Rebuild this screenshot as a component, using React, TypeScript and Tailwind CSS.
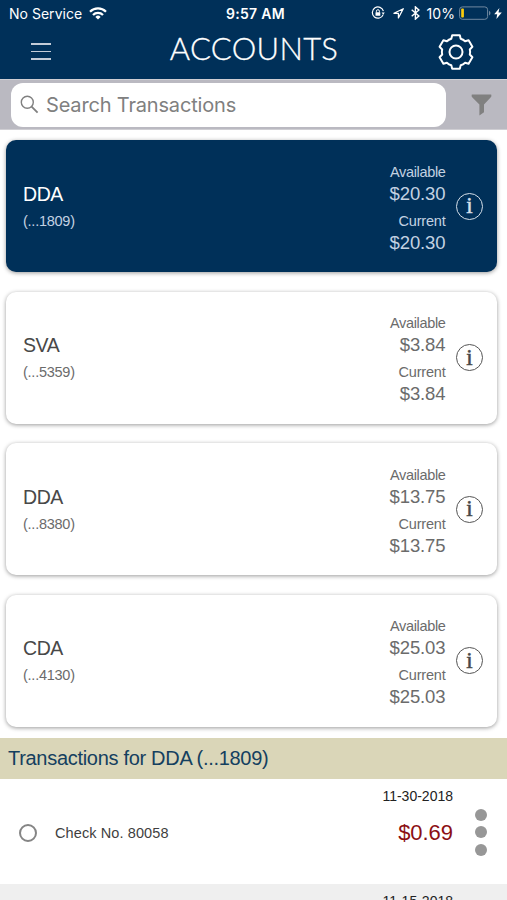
type Account = {
  name: string;
  mask: string;
  available: string;
  current: string;
  selected?: boolean;
};

const accounts: Account[] = [
  { name: "DDA", mask: "(...1809)", available: "$20.30", current: "$20.30", selected: true },
  { name: "SVA", mask: "(...5359)", available: "$3.84", current: "$3.84" },
  { name: "DDA", mask: "(...8380)", available: "$13.75", current: "$13.75" },
  { name: "CDA", mask: "(...4130)", available: "$25.03", current: "$25.03" },
];

function StatusBar() {
  return (
    <div className="grid h-7 grid-cols-[1fr_auto_1fr] items-center pb-[2px] pl-[9px] pr-[5px] font-['Inter',sans-serif] text-[14px] text-white">
      <div className="flex items-center gap-[7px]">
        <span className="tracking-[0.02px]">No Service</span>
        <svg width="18" height="13" viewBox="0 0 18 13" fill="none" stroke="currentColor" strokeWidth="2.3">
          <path d="M1 4.7a11.4 11.4 0 0 1 16 0" />
          <path d="M4 8a7 7 0 0 1 10 0" />
          <path d="M9 12.5 6.4 9.9a3.7 3.7 0 0 1 5.2 0z" fill="currentColor" stroke="none" />
        </svg>
      </div>
      <span className="font-semibold tracking-[0.3px]">9:57 AM</span>
      <div className="flex items-center justify-end">
        <svg className="mr-[8px]" width="14" height="14" viewBox="0 0 14 14" fill="none" stroke="currentColor">
          <path d="M12.2 8.6A5.6 5.6 0 1 1 12.4 5.2" strokeWidth="1.2" />
          <path d="M10.6 6.4h3.2l-1.6 2.3z" fill="currentColor" stroke="none" />
          <path d="M5.4 6.5V5.2a1.5 1.5 0 0 1 3 0v1.3" strokeWidth="1" />
          <rect x="4.5" y="6.2" width="4.8" height="3.6" rx="0.5" fill="currentColor" stroke="none" />
        </svg>
        <svg className="mr-[7px]" width="11" height="11" viewBox="0 0 11 11" fill="none" stroke="currentColor">
          <path d="M10.3.7.9 5.3h4.5v4.6z" strokeWidth="1.2" strokeLinejoin="round" />
        </svg>
        <svg className="mr-[6px]" width="9" height="14" viewBox="0 0 9 14" fill="none" stroke="currentColor">
          <path d="m.7 3.8 7.2 6.1-3.5 3.2V.9l3.5 3.2-7.2 6.1" strokeWidth="1.4" />
        </svg>
        <span className="mr-[4px] tracking-[0.1px]">10%</span>
        <svg width="32" height="14" viewBox="0 0 32 14">
          <rect x="0.6" y="0.9" width="28" height="12.4" rx="2.8" fill="none" stroke="#7089a0" strokeWidth="1" />
          <rect x="2.2" y="2.6" width="2.7" height="9" rx="0.8" fill="#fccb0a" />
          <path d="M30 4.8c2 .9 2 3.7 0 4.6z" fill="#7089a0" />
        </svg>
        <svg className="ml-[3px]" width="8" height="11" viewBox="0 0 8 11" fill="currentColor">
          <path d="M5.4 0 .2 6.3h3L2.4 11l5.4-6.6H4.5z" />
        </svg>
      </div>
    </div>
  );
}

function GearIcon() {
  return (
    <svg width="38" height="38" viewBox="-19 -19 38 38" fill="none" stroke="white" strokeWidth="2" strokeLinejoin="round">
      <path d="M-3.8-16.7H3.8L4.7-13.2Q7.200-12.5 9.1-10.7L12.6-11.7 16.4-5.2 13.8-2.5Q14.5 0 13.8 2.5L16.4 5.2 12.6 11.7 9.1 10.7Q7.200 12.5 4.7 13.2L3.8 16.700H-3.8L-4.7 13.2Q-7.200 12.5-9.1 10.7L-12.6 11.7-16.4 5.2-13.8 2.5Q-14.5 0-13.8-2.5L-16.4-5.2-12.6-11.7-9.1-10.7Q-7.200-12.5-4.7-13.2z" />
      <circle r="6.5" />
    </svg>
  );
}

function Header() {
  return (
    <header className="h-[79px] bg-[#003059]">
      <StatusBar />
      <div className="grid h-[48px] grid-cols-[1fr_auto_1fr] items-center pl-[31px] pr-8">
        <div className="-mt-px flex w-5 flex-col gap-[6px]">
          <span className="h-[1.5px] bg-[#c3ccd8]" />
          <span className="h-[1.5px] bg-[#c3ccd8]" />
          <span className="h-[1.5px] bg-[#c3ccd8]" />
        </div>
        <h1 className="-mr-0.5 -mt-[7px] font-['Lato',sans-serif] text-[31px] font-light leading-none tracking-[0.3px] text-white [-webkit-text-stroke:0.3px_white]">
          ACCOUNTS
        </h1>
        <div className="flex justify-end">
          <GearIcon />
        </div>
      </div>
    </header>
  );
}

function SearchBar() {
  return (
    <div className="flex h-[51px] items-center border-y border-[#cfced3] bg-[#bab9c1] pl-[11px] pr-[15px]">
      <div className="flex h-11 w-[435px] items-center rounded-xl bg-white pl-[9px] text-[#808080]">
        <svg width="19" height="19" viewBox="0 0 19 19" fill="none" stroke="currentColor" strokeWidth="1.4">
          <circle cx="7.3" cy="7.3" r="6" />
          <path d="m11.6 11.6 6 6" strokeWidth="1.9" />
        </svg>
        <span className="ml-[7px] font-['Inter',sans-serif] text-[20px] tracking-[-0.17px]">Search Transactions</span>
      </div>
      <svg className="ml-auto" width="21" height="22" viewBox="0 0 21 22" fill="#808080">
        <path d="M.8.5h19.4q.8 1.8-.6 3L13 10.5v7.8L8.4 21.5v-11L1.4 3.5Q0 2.3.8.5z" />
      </svg>
    </div>
  );
}

function AccountCard({ account }: { account: Account }) {
  const { name, mask, available, current, selected } = account;
  return (
    <div
      className={`flex h-[132px] items-center rounded-[10px] pl-[17px] pr-[14px] pt-0.5 shadow-[0_1px_4px_rgba(0,0,0,0.4)] ${
        selected ? "bg-[#003059] text-[#c3d2e2]" : "bg-white text-[#6b6b6b]"
      }`}
    >
      <div className="pt-px">
        <p className={`text-[19.5px] leading-[27px] tracking-[-0.4px] ${selected ? "text-white" : "text-[#484848]"}`}>{name}</p>
        <p className="text-[14.5px] leading-[27px] tracking-[-0.25px]">{mask}</p>
      </div>
      <div className="ml-auto text-right leading-[22px]">
        <p className="text-[14.5px] tracking-[-0.35px]">Available</p>
        <p className="text-[18.5px] tracking-[-0.1px]">{available}</p>
        <p className="mt-[5px] text-[14.5px] tracking-[-0.2px]">Current</p>
        <p className="text-[18.5px] tracking-[-0.1px]">{current}</p>
      </div>
      <span
        className={`-mt-0.5 ml-[10.5px] flex size-[27px] items-center justify-center rounded-full border-[1.5px] pb-px font-['Liberation_Serif',serif] text-[23px] leading-none [-webkit-text-stroke:0.5px_currentColor] ${
          selected ? "border-[#d5dfe9] text-[#d5dfe9]" : "border-[#555] text-[#484848]"
        }`}
      >
        i
      </span>
    </div>
  );
}

function TransactionRow() {
  return (
    <div className="flex h-[105px] bg-white pl-[19px] pr-[20px]">
      <div className="flex items-center pt-[2px]">
        <span className="size-[18px] rounded-full border-2 border-[#858585]" />
        <span className="ml-[18px] pt-0.5 text-[14.5px] tracking-[0.1px] text-[#3f3f3f]">Check No. 80058</span>
      </div>
      <div className="ml-auto text-right">
        <p className="mt-[7px] text-[14px] leading-5 text-[#222]">11-30-2018</p>
        <p className="mt-[13px] text-[22px] leading-7 tracking-[-0.05px] text-[#8c0f13]">$0.69</p>
      </div>
      <div className="ml-[22px] flex flex-col justify-center gap-[5.5px] pt-px">
        <span className="size-3 rounded-full bg-[#979797]" />
        <span className="size-3 rounded-full bg-[#979797]" />
        <span className="size-3 rounded-full bg-[#979797]" />
      </div>
    </div>
  );
}

export default function App() {
  return (
    <div className="h-[900px] w-[507px] overflow-hidden bg-white font-['Liberation_Sans',sans-serif]">
      <Header />
      <SearchBar />
      <main className="flex flex-col gap-[19.5px] pb-[11.5px] pl-[6px] pr-[10px] pt-[10px]">
        {accounts.map((account) => (
          <AccountCard key={account.mask} account={account} />
        ))}
      </main>
      <section>
        <h2 className="h-[41px] bg-[#dad6b8] pl-2 text-[20px] leading-[41px] tracking-[-0.3px] text-[#14405f]">
          Transactions for DDA (...1809)
        </h2>
        <TransactionRow />
        <div className="flex h-[105px] justify-end bg-[#efefef] pr-[54px]">
          <p className="mt-[7px] text-[14px] leading-5 text-[#222]">11-15-2018</p>
        </div>
      </section>
    </div>
  );
}
